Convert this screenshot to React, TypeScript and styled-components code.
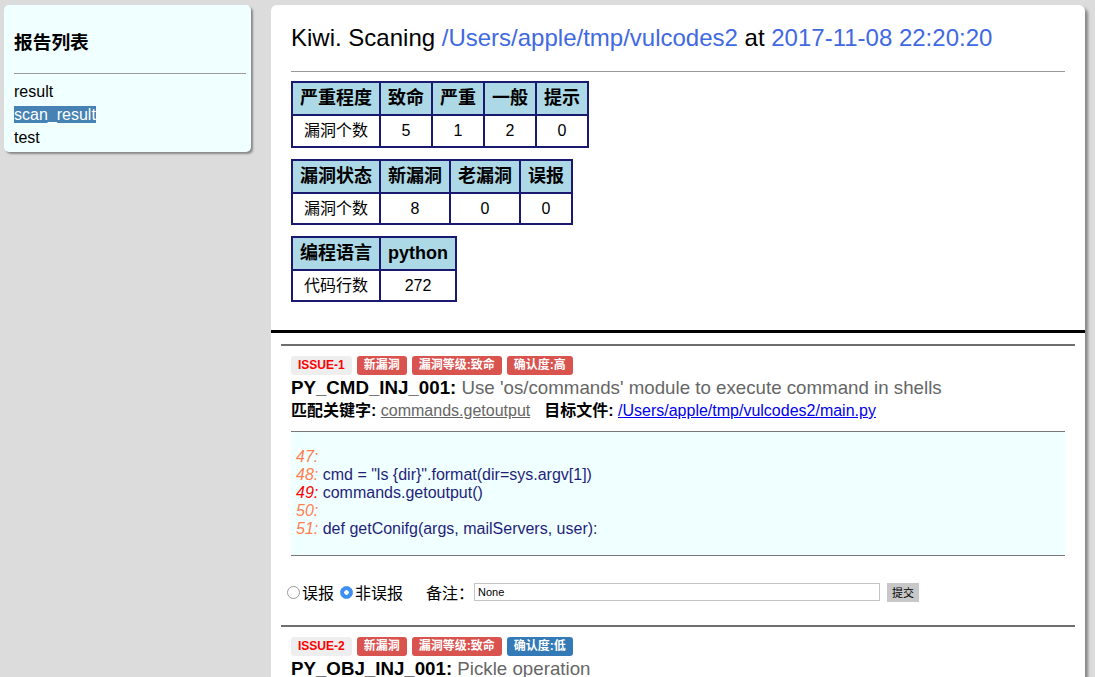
import styled, { createGlobalStyle } from "styled-components";

interface ICodeLine {
    no: number;
    text: string;
    hit?: boolean;
}

interface IIssue {
    id: number;
    rule: string;
    description: string;
    level: string;
    confidence: string;
    confidenceTone: "danger" | "info";
    keyword: string;
    file: string;
    lines: ICodeLine[];
}

const issues: IIssue[] = [
    {
        id: 1,
        rule: "PY_CMD_INJ_001",
        description: "Use 'os/commands' module to execute command in shells",
        level: "致命",
        confidence: "高",
        confidenceTone: "danger",
        keyword: "commands.getoutput",
        file: "/Users/apple/tmp/vulcodes2/main.py",
        lines: [
            {no: 47, text: ""},
            {no: 48, text: "cmd = \"ls {dir}\".format(dir=sys.argv[1])"},
            {no: 49, text: "commands.getoutput()", hit: true},
            {no: 50, text: ""},
            {no: 51, text: "def getConifg(args, mailServers, user):"},
        ],
    },
    {
        id: 2,
        rule: "PY_OBJ_INJ_001",
        description: "Pickle operation",
        level: "致命",
        confidence: "低",
        confidenceTone: "info",
        keyword: "pickle.loads",
        file: "/Users/apple/tmp/vulcodes2/main.py",
        lines: [
            {no: 60, text: ""},
            {no: 61, text: "data = open(path).read()"},
            {no: 62, text: "pickle.loads(data)", hit: true},
            {no: 63, text: ""},
            {no: 64, text: "return data"},
        ],
    },
];

const summaryTables = [
    {head: ["严重程度", "致命", "严重", "一般", "提示"], body: ["漏洞个数", "5", "1", "2", "0"]},
    {head: ["漏洞状态", "新漏洞", "老漏洞", "误报"], body: ["漏洞个数", "8", "0", "0"]},
    {head: ["编程语言", "python"], body: ["代码行数", "272"]},
];

const reports = ["result", "scan_result", "test"];

export default function App() {
    return <>
        <GlobalStyle/>
        <Page>
            <Sidebar>
                <SideTitle>报告列表</SideTitle>
                <SideRule/>
                <ReportList>
                    {reports.map(name =>
                        <ReportItem key={name}>
                            <ReportLink $active={name === "scan_result"}>{name}</ReportLink>
                        </ReportItem>
                    )}
                </ReportList>
            </Sidebar>

            <Panel>
                <Summary>
                    <Heading>
                        Kiwi. Scaning <Accent>/Users/apple/tmp/vulcodes2</Accent> at <Accent>2017-11-08 22:20:20</Accent>
                    </Heading>
                    <Rule/>
                    {summaryTables.map((t, i) =>
                        <Table key={i}>
                            <tbody>
                            <tr>{t.head.map(h => <Th key={h}>{h}</Th>)}</tr>
                            <tr>{t.body.map((b, j) => <Td key={j}>{b}</Td>)}</tr>
                            </tbody>
                        </Table>
                    )}
                </Summary>

                <IssueList>
                    {issues.map(issue =>
                        <Issue key={issue.id}>
                            <Labels>
                                <Label $tone="plain">ISSUE-{issue.id}</Label>
                                <Label $tone="danger">新漏洞</Label>
                                <Label $tone="danger">漏洞等级:{issue.level}</Label>
                                <Label $tone={issue.confidenceTone}>确认度:{issue.confidence}</Label>
                            </Labels>
                            <IssueTitle>
                                <b>{issue.rule}:</b> <Muted>{issue.description}</Muted>
                            </IssueTitle>
                            <Meta>
                                <b>匹配关键字:</b> <Keyword>{issue.keyword}</Keyword>
                                <MetaGroup><b>目标文件:</b> <FileLink href="#">{issue.file}</FileLink></MetaGroup>
                            </Meta>
                            <Code>
                                {issue.lines.map(line =>
                                    <CodeLine key={line.no}>
                                        <LineNo $hit={line.hit}>{line.no}:</LineNo> {line.text}
                                    </CodeLine>
                                )}
                            </Code>
                            <Review>
                                <Choice>
                                    <Radio type="radio" name={`review-${issue.id}`}/>误报
                                </Choice>
                                <Choice>
                                    <Radio type="radio" name={`review-${issue.id}`} defaultChecked/>非误报
                                </Choice>
                                <NoteLabel>备注：</NoteLabel>
                                <NoteInput defaultValue="None"/>
                                <Submit>提交</Submit>
                            </Review>
                        </Issue>
                    )}
                </IssueList>
            </Panel>
        </Page>
    </>
}

const GlobalStyle = createGlobalStyle`
  html, body {
    margin: 0;
    padding: 0;
    height: 100%;
    overflow: hidden;
  }

  body {
    background: #dcdcdc;
    color: #000;
    font-family: "Liberation Sans", "Noto Sans CJK SC", sans-serif;
  }
`

const Page = styled.div`
  display: flex;
  align-items: flex-start;
  gap: 20px;
  padding: 5px 0 0 4px;
`

const Sidebar = styled.aside`
  width: 247px;
  box-sizing: border-box;
  padding: 0 5px 3px 10px;
  background: #f0ffff;
  border-radius: 5px;
  box-shadow: 2px 2px 2px #8a8a8a;
`

const SideTitle = styled.h3`
  margin: 0;
  padding-top: 27px;
  font-size: 18.72px;
  line-height: 22px;
  font-weight: bold;
`

const SideRule = styled.hr`
  margin: 19px 0 0;
  border: none;
  border-top: 1px solid #999;
`

const ReportList = styled.ul`
  list-style: none;
  margin: 6px 0 0;
  padding: 0;
`

const ReportItem = styled.li`
  font-size: 16px;
  line-height: 23px;
`

const ReportLink = styled.span<{ $active?: boolean }>`
  color: ${({$active}) => $active ? "#fff" : "#000"};
  background: ${({$active}) => $active ? "#4682b4" : "transparent"};
  cursor: pointer;
`

const Panel = styled.main`
  width: 814px;
  background: #fff;
  border-radius: 6px;
  box-shadow: 3px 3px 3px #888;
`

const Summary = styled.section`
  padding: 19px 20px 28px;
  border-bottom: 3px solid #000;
`

const Heading = styled.h2`
  margin: 0;
  font-size: 24px;
  line-height: 28px;
  font-weight: normal;
`

const Accent = styled.span`
  color: #4169e1;
`

const Rule = styled.hr`
  margin: 19px 0 9px;
  border: none;
  border-top: 1px solid #999;
`

const Table = styled.table`
  border-collapse: collapse;
  margin-bottom: 11px;

  &:first-of-type td {
    line-height: 20px;
  }

  &:last-child {
    margin-bottom: 0;
  }
`

const Th = styled.th`
  background: #add8e6;
  border: 2px solid #191970;
  padding: 5px 7px;
  font-size: 18px;
  line-height: 21px;
  font-weight: bold;
  text-align: center;
`

const Td = styled.td`
  border: 2px solid #191970;
  padding: 5px 7px;
  font-size: 16px;
  line-height: 19px;
  text-align: center;
`

const IssueList = styled.div`
  padding: 11px 10px 0;
`

const Issue = styled.article`
  padding: 10px 0 23px;
  border-top: 2px solid #6e6e6e;
`

const Labels = styled.div`
  display: flex;
  gap: 5px;
  padding-left: 10px;
`

const labelColors = {
    plain: {bg: "#eee", fg: "#f00"},
    danger: {bg: "#d9534f", fg: "#fff"},
    info: {bg: "#337ab7", fg: "#fff"},
}

const Label = styled.span<{ $tone: "plain" | "danger" | "info" }>`
  padding: 3px 7px;
  border-radius: 3px;
  font-size: 12px;
  line-height: 13px;
  font-weight: bold;
  background: ${({$tone}) => labelColors[$tone].bg};
  color: ${({$tone}) => labelColors[$tone].fg};
`

const IssueTitle = styled.div`
  margin-top: 2px;
  padding-left: 10px;
  font-size: 18.72px;
  line-height: 22px;
`

const Muted = styled.span`
  color: #666;
`

const Meta = styled.div`
  margin-top: 1px;
  padding-left: 10px;
  font-size: 16px;
  line-height: 22px;
`

const Keyword = styled.span`
  color: #666;
  text-decoration: underline;
`

const MetaGroup = styled.span`
  margin-left: 14px;
`

const FileLink = styled.a`
  color: #00e;
  text-decoration: underline;
`

const Code = styled.div`
  margin: 9px 10px 0;
  padding: 16px 5px 17px;
  background: #f0ffff;
  border-top: 1px solid #777;
  border-bottom: 1px solid #777;
  color: #1f1f7a;
  font-size: 16px;
  line-height: 18px;
`

const CodeLine = styled.div`
  white-space: pre;
  height: 18px;
`

const LineNo = styled.i<{ $hit?: boolean }>`
  color: ${({$hit}) => $hit ? "#f00" : "#ff7f50"};
`

const Review = styled.div`
  display: flex;
  align-items: center;
  height: 20px;
  margin-top: 26px;
  padding-left: 5px;
  font-size: 16px;
`

const Choice = styled.label`
  display: flex;
  align-items: center;
  margin-right: 5px;
  cursor: pointer;
`

const Radio = styled.input`
  appearance: none;
  width: 13px;
  height: 13px;
  margin: 0 2px 0 1px;
  border: 1px solid #9a9a9a;
  border-radius: 50%;
  background: #fff;
  box-sizing: border-box;

  &:checked {
    border-color: #3d8ff2;
    background: radial-gradient(circle, #fff 0 2px, #3d8ff2 2.5px);
  }
`

const NoteLabel = styled.span`
  margin-left: 18px;
`

const NoteInput = styled.input`
  width: 406px;
  height: 18px;
  box-sizing: border-box;
  margin: 0;
  padding: 0 3px;
  border: 1px solid #c4c4c4;
  font-family: "Liberation Sans", sans-serif;
  font-size: 11px;
`

const Submit = styled.button`
  height: 19px;
  margin-left: 7px;
  padding: 0 5px;
  border: none;
  background: #c8c8c8;
  font-family: "Noto Sans CJK SC", sans-serif;
  font-size: 11px;
  line-height: 19px;
`
